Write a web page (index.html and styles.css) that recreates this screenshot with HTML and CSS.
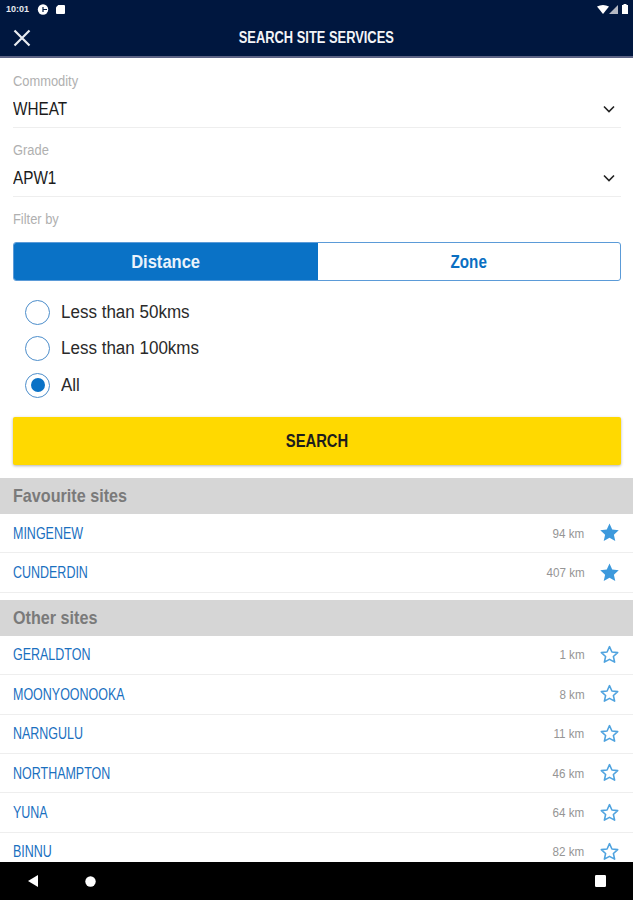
FILE: index.html
```html
<!DOCTYPE html>
<html lang="en">
<head>
<meta charset="utf-8">
<title>Search Site Services</title>
<link rel="stylesheet" href="styles.css">
</head>
<body>
<div class="app">
  <header class="top">
    <div class="status">
      <span class="time">10:01</span>
      <svg class="st-ic" width="12" height="11" viewBox="0 0 12 11"><circle cx="6" cy="5.500" r="5.200" fill="#fff"/><path d="M6 5.500h4M6 3v5" stroke="#001a40" stroke-width="1.200"/></svg>
      <svg class="st-ic" width="9" height="10" viewBox="0 0 10 11"><path d="M2.500 1H9a1 1 0 0 1 1 1v8a1 1 0 0 1-1 1H1a1 1 0 0 1-1-1V3.500z" fill="#fff"/></svg>
      <span class="status-gap"></span>
      <svg class="wifi" width="12" height="9" viewBox="0 0 12 9"><path d="M0 1.500Q6-1.500 12 1.500L6 9z" fill="#fff"/></svg>
      <svg class="sig" width="9" height="9" viewBox="0 0 9 9"><path d="M9 0v9H0z" fill="#b4b8c2"/></svg>
      <svg class="batt" width="6" height="10" viewBox="0 0 6 10"><path d="M1.500 0h3v1H6v9H0V1h1.500z" fill="#fff"/></svg>
    </div>
    <div class="bar">
      <svg class="close" width="18" height="18" viewBox="0 0 18 18"><path d="M1.500 1.500l15 15M16.500 1.500l-15 15" stroke="#e8ebf0" stroke-width="2.200" fill="none"/></svg>
      <h1 class="title">SEARCH SITE SERVICES</h1>
    </div>
  </header>

  <main class="content">
    <section class="form">
      <div class="field">
        <div class="label">Commodity</div>
        <div class="select"><span>WHEAT</span>
          <svg width="12" height="8" viewBox="0 0 12 8"><path d="M1 1.500l5 5 5-5" stroke="#222" stroke-width="1.600" fill="none"/></svg>
        </div>
      </div>
      <div class="field">
        <div class="label">Grade</div>
        <div class="select"><span>APW1</span>
          <svg width="12" height="8" viewBox="0 0 12 8"><path d="M1 1.500l5 5 5-5" stroke="#222" stroke-width="1.600" fill="none"/></svg>
        </div>
      </div>
      <div class="label filter-label">Filter by</div>
      <div class="tabs">
        <div class="tab active"><span class="tab-text">Distance</span></div>
        <div class="tab"><span class="tab-text zone">Zone</span></div>
      </div>
      <div class="radios">
        <div class="radio"><span class="dot"></span><span class="radio-text">Less than 50kms</span></div>
        <div class="radio"><span class="dot"></span><span class="radio-text">Less than 100kms</span></div>
        <div class="radio"><span class="dot on"></span><span class="radio-text">All</span></div>
      </div>
      <button class="search"><span class="search-text">SEARCH</span></button>
    </section>

    <h2 class="section"><span class="section-text">Favourite sites</span></h2>
    <ul class="sites">
      <li class="site"><span class="name">MINGENEW</span><span class="km">94 km</span><svg class="star" viewBox="0 0 20 20"><path class="fill" d="M10 1.500l2.600 5.700 6.200.7-4.600 4.200 1.300 6.100L10 15.100l-5.500 3.100 1.300-6.100L1.200 7.900l6.200-.7z"/></svg></li>
      <li class="site"><span class="name">CUNDERDIN</span><span class="km">407 km</span><svg class="star" viewBox="0 0 20 20"><path class="fill" d="M10 1.500l2.600 5.700 6.200.7-4.600 4.200 1.300 6.100L10 15.100l-5.500 3.100 1.300-6.100L1.200 7.900l6.200-.7z"/></svg></li>
    </ul>

    <h2 class="section other"><span class="section-text">Other sites</span></h2>
    <ul class="sites">
      <li class="site"><span class="name">GERALDTON</span><span class="km">1 km</span><svg class="star" viewBox="0 0 20 20"><path class="line" d="M10 2.500l2.300 5.100 5.500.6-4.100 3.700 1.200 5.400L10 14.600l-4.900 2.700 1.200-5.400-4.100-3.700 5.500-.6z"/></svg></li>
      <li class="site"><span class="name">MOONYOONOOKA</span><span class="km">8 km</span><svg class="star" viewBox="0 0 20 20"><path class="line" d="M10 2.500l2.300 5.100 5.500.6-4.100 3.700 1.200 5.400L10 14.600l-4.900 2.700 1.200-5.400-4.100-3.700 5.500-.6z"/></svg></li>
      <li class="site"><span class="name">NARNGULU</span><span class="km">11 km</span><svg class="star" viewBox="0 0 20 20"><path class="line" d="M10 2.500l2.300 5.100 5.500.6-4.100 3.700 1.200 5.400L10 14.600l-4.900 2.700 1.200-5.400-4.100-3.700 5.500-.6z"/></svg></li>
      <li class="site"><span class="name">NORTHAMPTON</span><span class="km">46 km</span><svg class="star" viewBox="0 0 20 20"><path class="line" d="M10 2.500l2.300 5.100 5.500.6-4.100 3.700 1.200 5.400L10 14.600l-4.900 2.700 1.200-5.400-4.100-3.700 5.500-.6z"/></svg></li>
      <li class="site"><span class="name">YUNA</span><span class="km">64 km</span><svg class="star" viewBox="0 0 20 20"><path class="line" d="M10 2.500l2.300 5.100 5.500.6-4.100 3.700 1.200 5.400L10 14.600l-4.900 2.700 1.200-5.400-4.100-3.700 5.500-.6z"/></svg></li>
      <li class="site"><span class="name">BINNU</span><span class="km">82 km</span><svg class="star" viewBox="0 0 20 20"><path class="line" d="M10 2.500l2.300 5.100 5.500.6-4.100 3.700 1.200 5.400L10 14.600l-4.900 2.700 1.200-5.400-4.100-3.700 5.500-.6z"/></svg></li>
    </ul>
  </main>

  <nav class="nav">
    <svg width="11" height="12" viewBox="0 0 11 12"><path d="M10 0v12L0 6z" fill="#fff"/></svg>
    <svg class="nav-home" width="11" height="11" viewBox="0 0 11 11"><circle cx="5.500" cy="5.500" r="5.200" fill="#fff"/></svg>
    <span class="nav-gap"></span>
    <svg width="11" height="12" viewBox="0 0 11 12"><rect width="11" height="12" rx="1.200" fill="#fff"/></svg>
  </nav>
</div>
</body>
</html>
```

FILE: styles.css
```css
* { box-sizing: border-box; }
html, body { margin: 0; height: 100%; }
body { font-family: "Liberation Sans", Arial, sans-serif; background: #fff; overflow: hidden; }
.app { width: 633px; height: 900px; display: flex; flex-direction: column; overflow: hidden; }

.top { flex: none; height: 58px; background: #00173f; border-bottom: 2px solid #5d6485; color: #fff; }
.status { height: 18px; padding: 0 5px 0 6px; display: flex; align-items: center; gap: 7px; }
.time { font-size: 9px; font-weight: 700; color: #e6e9ef; margin-right: 1px; }
.status-gap { flex: 1; }
.status svg { flex: none; }
.status .wifi { margin-right: -7px; }
.status .sig { margin-right: -3px; }
.bar { position: relative; height: 38px; padding-top: 2px; display: flex; align-items: center; justify-content: center; }
.close { position: absolute; left: 13px; top: 11px; }
.title { margin: 0; font-size: 16px; font-weight: 700; color: #f3f4f7; transform: scaleX(.805); white-space: nowrap; }

.content { flex: 1; min-height: 0; overflow: hidden; }
.form { padding: 13px 12px 0 13px; }
.field { height: 69px; }
.label { font-size: 14px; line-height: 20px; color: #b0b0b0; transform: scaleX(.92); transform-origin: left; }
.select { height: 37px; border-bottom: 1px solid #eeeeee; display: flex; align-items: center; justify-content: space-between; padding: 0 6px 0 0; font-size: 18px; color: #1b1b1b; }
.select span { transform: scaleX(.85); transform-origin: left; }
.tabs { display: flex; height: 39px; margin-top: 13px; border: 1.500px solid #5b9bd8; border-radius: 3px; overflow: hidden; }
.tab { flex: 1; display: flex; align-items: center; justify-content: center; font-size: 19px; font-weight: 700; color: #0a6fc2; }
.tab.active { flex: 0 0 304px; background: #0a72c6; color: #eaf3fb; }
.tab-text { transform: scaleX(.87); }
.tab-text.zone { transform: scaleX(.8); }
.radios { display: flex; flex-direction: column; gap: 12.500px; padding: 19px 0 0 12px; }
.radio { display: flex; align-items: center; gap: 11px; height: 24px; font-size: 18px; color: #2a2a2a; }
.radio-text { transform: scaleX(.945); transform-origin: left; }
.dot { flex: none; width: 25px; height: 25px; border: 1.500px solid #4d8ecb; border-radius: 50%; display: flex; align-items: center; justify-content: center; }
.dot.on::after { content: ""; width: 14px; height: 14px; border-radius: 50%; background: #0a72c6; }
.search { display: block; width: 100%; height: 48px; margin-top: 20px; border: 0; border-radius: 2px; background: #ffd900; box-shadow: 0 1px 3px rgba(0,0,0,.3); font: 700 18px "Liberation Sans", Arial, sans-serif; color: #1d1d1d; }
.search-text { display: inline-block; transform: scaleX(.82); }

.section { margin: 13px 0 0; height: 36px; padding-left: 13px; display: flex; align-items: center; background: #d6d6d6; font-size: 19px; font-weight: 700; color: #7a7a7a; }
.section-text { transform: scaleX(.85); transform-origin: left; }
.section.other { margin-top: 7px; }
.sites { list-style: none; margin: 0; padding: 0; }
.site { height: 39.400px; border-bottom: 1px solid #eeeeee; display: flex; align-items: center; padding: 1px 14px 0 13px; }
.name { flex: 1; font-size: 16px; color: #1a70bf; transform: scaleX(.78); transform-origin: left; }
.km { font-size: 12px; color: #959595; margin-right: 13px; transform: scaleX(.97); }
.star { flex: none; width: 21px; height: 21px; position: relative; left: 1px; top: -1px; }
.star .fill { fill: #3d99dc; }
.star .line { fill: #fff; stroke: #4fa3df; stroke-width: 1.500; stroke-linejoin: round; }

.nav { flex: none; height: 38px; background: #000; display: flex; align-items: center; padding: 0 27px 0 28px; }
.nav-home { margin-left: 46px; }
.nav-gap { flex: 1; }
```
